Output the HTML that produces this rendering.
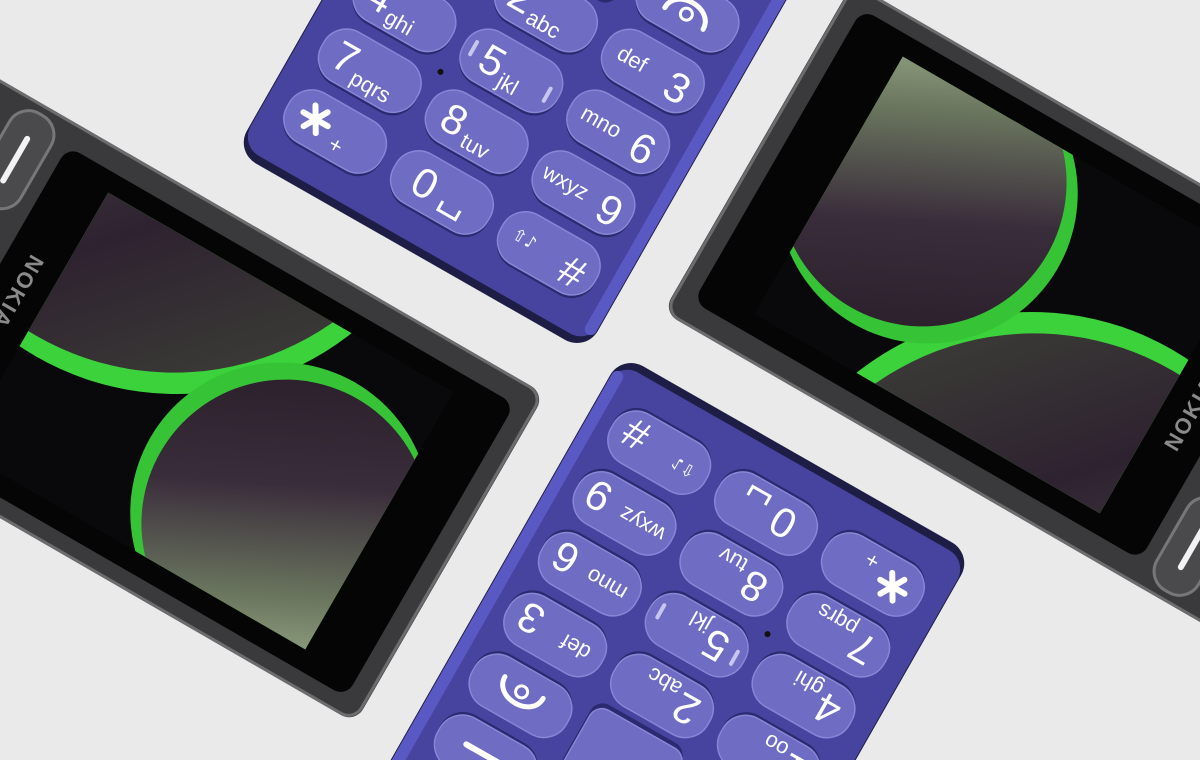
<!DOCTYPE html>
<html><head><meta charset="utf-8">
<style>
html,body{margin:0;padding:0;background:#eaeaea;width:1200px;height:760px;overflow:hidden;}
svg{display:block}
.d{font-family:"Liberation Sans",sans-serif;font-size:42px;fill:#fff}
.l{font-family:"Liberation Sans",sans-serif;font-size:22px;fill:#fff}
.s{font-family:"DejaVu Sans",sans-serif;font-size:17px;fill:#fff}
.nk{font-family:"Liberation Sans",sans-serif;font-size:22px;font-weight:bold;fill:#8a8a8a;letter-spacing:2px}
</style></head>
<body>
<svg width="1200" height="760" viewBox="0 0 1200 760" xmlns="http://www.w3.org/2000/svg">
<defs>
<clipPath id="scr"><rect x="-479" y="44" width="399" height="297"/></clipPath>
<linearGradient id="b1" x1="0" y1="0.2" x2="0.9" y2="1">
<stop offset="0" stop-color="#6b7a62"/><stop offset="0.35" stop-color="#4a4548"/><stop offset="0.65" stop-color="#2e2230"/><stop offset="0.9" stop-color="#3a3a36"/><stop offset="1" stop-color="#4ba045"/>
</linearGradient>
<linearGradient id="b2" x1="0.2" y1="0" x2="0.7" y2="1">
<stop offset="0" stop-color="#2a1e2a"/><stop offset="0.4" stop-color="#3a2d3b"/><stop offset="0.75" stop-color="#6a765e"/><stop offset="1" stop-color="#9aaa8a"/>
</linearGradient>
</defs>
<rect width="1200" height="760" fill="#eaeaea"/>

<!-- ===== HALF A ===== -->
<g>
<g transform="translate(545,394) rotate(30)">
<rect x="-1000" y="0" width="1000" height="380" rx="16" fill="#3a3a3c"/>
<rect x="-999" y="1.5" width="997" height="377" rx="15" fill="none" stroke="#6c6c6e" stroke-width="3"/>
<rect x="-537" y="24" width="516" height="338" rx="14" fill="#050505"/>
<rect x="-600" y="10" width="48" height="104" rx="22" fill="#4a4a4d" stroke="#77777a" stroke-width="3"/>
<line x1="-576" y1="38" x2="-576" y2="86" stroke="#f2f2f2" stroke-width="6" stroke-linecap="round"/>
<text class="nk" transform="translate(-515,135) rotate(90)">NOKIA</text>
<g clip-path="url(#scr)">
<rect x="-479" y="44" width="399" height="297" fill="#09090b"/>
<circle cx="-460" cy="-60" r="282" fill="#3bd23b"/>
<circle cx="-470" cy="-72" r="276" fill="url(#b1)"/>
<circle cx="-170" cy="235" r="150" fill="#36c436"/>
<circle cx="-160" cy="242" r="144" fill="url(#b2)"/>
</g>
</g>

<g transform="translate(477,133) rotate(29.7)">
<rect x="-201" y="-460" width="404" height="596" rx="24" fill="#1e1d45"/>
<rect x="-200" y="-460" width="402" height="588" rx="22" fill="#47449f"/>
<rect x="190" y="-460" width="12" height="580" rx="6" fill="#5a58c2"/>
<circle cx="-62" cy="-35" r="3" fill="#111"/>
<g transform="translate(123,-280)"><rect x="-54" y="-26" width="108" height="56" rx="26" fill="#2b2970"/><rect x="-55" y="-29" width="108" height="56" rx="26" fill="#6e6cc3" stroke="#8886d6" stroke-width="1.5"/><line x1="-22" y1="0" x2="22" y2="0" stroke="#fff" stroke-width="6" stroke-linecap="round"/></g>
<g transform="translate(-123,-210)"><rect x="-54" y="-26" width="108" height="56" rx="26" fill="#2b2970"/><rect x="-55" y="-29" width="108" height="56" rx="26" fill="#6e6cc3" stroke="#8886d6" stroke-width="1.5"/></g>
<g transform="translate(0,-225)"><rect x="-50" y="-42" width="104" height="92" rx="14" fill="#2b2970"/><rect x="-52" y="-45" width="104" height="90" rx="14" fill="#6e6cc3" stroke="#8886d6" stroke-width="1.5"/></g>
<g transform="translate(123,-210)"><rect x="-54" y="-26" width="108" height="56" rx="26" fill="#2b2970"/><rect x="-55" y="-29" width="108" height="56" rx="26" fill="#6e6cc3" stroke="#8886d6" stroke-width="1.5"/><path d="M-22,8 C-22,-16 22,-16 22,8" stroke="#fff" stroke-width="5" fill="none" stroke-linecap="round"/><circle cx="0" cy="3" r="6" stroke="#fff" stroke-width="3" fill="none"/></g>
<g transform="translate(-123,-140)"><rect x="-54" y="-26" width="108" height="56" rx="26" fill="#2b2970"/><rect x="-55" y="-29" width="108" height="56" rx="26" fill="#6e6cc3" stroke="#8886d6" stroke-width="1.5"/><text class="d" x="-40" y="14">1</text><text class="l" x="-14" y="20">oo</text></g>
<g transform="translate(0,-140)"><rect x="-54" y="-26" width="108" height="56" rx="26" fill="#2b2970"/><rect x="-55" y="-29" width="108" height="56" rx="26" fill="#6e6cc3" stroke="#8886d6" stroke-width="1.5"/><text class="d" x="-40" y="14">2</text><text class="l" x="-14" y="20">abc</text></g>
<g transform="translate(123,-140)"><rect x="-54" y="-26" width="108" height="56" rx="26" fill="#2b2970"/><rect x="-55" y="-29" width="108" height="56" rx="26" fill="#6e6cc3" stroke="#8886d6" stroke-width="1.5"/><text class="l" x="-40" y="6">def</text><text class="d" x="40" y="16" text-anchor="end">3</text></g>
<g transform="translate(-123,-70)"><rect x="-54" y="-26" width="108" height="56" rx="26" fill="#2b2970"/><rect x="-55" y="-29" width="108" height="56" rx="26" fill="#6e6cc3" stroke="#8886d6" stroke-width="1.5"/><text class="d" x="-40" y="14">4</text><text class="l" x="-14" y="20">ghi</text></g>
<g transform="translate(0,-70)"><rect x="-54" y="-26" width="108" height="56" rx="26" fill="#2b2970"/><rect x="-55" y="-29" width="108" height="56" rx="26" fill="#6e6cc3" stroke="#8886d6" stroke-width="1.5"/><text class="d" x="-34" y="14">5</text><text class="l" x="-8" y="20">jkl</text><rect x="-47" y="-11" width="4" height="18" rx="2" fill="#c8c6f0"/><rect x="40" y="-7" width="4" height="18" rx="2" fill="#c8c6f0"/></g>
<g transform="translate(123,-70)"><rect x="-54" y="-26" width="108" height="56" rx="26" fill="#2b2970"/><rect x="-55" y="-29" width="108" height="56" rx="26" fill="#6e6cc3" stroke="#8886d6" stroke-width="1.5"/><text class="l" x="-42" y="6">mno</text><text class="d" x="40" y="16" text-anchor="end">6</text></g>
<g transform="translate(-123,0)"><rect x="-54" y="-26" width="108" height="56" rx="26" fill="#2b2970"/><rect x="-55" y="-29" width="108" height="56" rx="26" fill="#6e6cc3" stroke="#8886d6" stroke-width="1.5"/><text class="d" x="-40" y="14">7</text><text class="l" x="-14" y="20">pqrs</text></g>
<g transform="translate(0,0)"><rect x="-54" y="-26" width="108" height="56" rx="26" fill="#2b2970"/><rect x="-55" y="-29" width="108" height="56" rx="26" fill="#6e6cc3" stroke="#8886d6" stroke-width="1.5"/><text class="d" x="-38" y="14">8</text><text class="l" x="-10" y="20">tuv</text></g>
<g transform="translate(123,0)"><rect x="-54" y="-26" width="108" height="56" rx="26" fill="#2b2970"/><rect x="-55" y="-29" width="108" height="56" rx="26" fill="#6e6cc3" stroke="#8886d6" stroke-width="1.5"/><text class="l" x="-46" y="6">wxyz</text><text class="d" x="42" y="16" text-anchor="end">9</text></g>
<g transform="translate(-123,70)"><rect x="-54" y="-26" width="108" height="56" rx="26" fill="#2b2970"/><rect x="-55" y="-29" width="108" height="56" rx="26" fill="#6e6cc3" stroke="#8886d6" stroke-width="1.5"/><g stroke="#fff" stroke-width="6" stroke-linecap="round"><line x1="-38" y1="-2" x2="-10" y2="-2"/><line x1="-31" y1="-14" x2="-17" y2="10"/><line x1="-17" y1="-14" x2="-31" y2="10"/></g><text class="l" x="0" y="18">+</text></g>
<g transform="translate(0,70)"><rect x="-54" y="-26" width="108" height="56" rx="26" fill="#2b2970"/><rect x="-55" y="-29" width="108" height="56" rx="26" fill="#6e6cc3" stroke="#8886d6" stroke-width="1.5"/><text class="d" x="-32" y="14">0</text><path d="M4,6 v10 h20 v-10" stroke="#fff" stroke-width="3" fill="none"/></g>
<g transform="translate(123,70)"><rect x="-54" y="-26" width="108" height="56" rx="26" fill="#2b2970"/><rect x="-55" y="-29" width="108" height="56" rx="26" fill="#6e6cc3" stroke="#8886d6" stroke-width="1.5"/><text class="s" x="-42" y="4">⇧♪</text><text class="d" x="40" y="18" text-anchor="end">#</text></g>
</g>
</g>

<!-- ===== HALF B (rotated copy) ===== -->
<g transform="rotate(180 604 353)">
<g transform="translate(545,394) rotate(30)">
<rect x="-1000" y="0" width="1000" height="380" rx="16" fill="#3a3a3c"/>
<rect x="-999" y="1.5" width="997" height="377" rx="15" fill="none" stroke="#6c6c6e" stroke-width="3"/>
<rect x="-537" y="24" width="516" height="338" rx="14" fill="#050505"/>
<rect x="-600" y="10" width="48" height="104" rx="22" fill="#4a4a4d" stroke="#77777a" stroke-width="3"/>
<line x1="-576" y1="38" x2="-576" y2="86" stroke="#f2f2f2" stroke-width="6" stroke-linecap="round"/>
<text class="nk" transform="translate(-515,135) rotate(90)">NOKIA</text>
<g clip-path="url(#scr)">
<rect x="-479" y="44" width="399" height="297" fill="#09090b"/>
<circle cx="-460" cy="-60" r="282" fill="#3bd23b"/>
<circle cx="-470" cy="-72" r="276" fill="url(#b1)"/>
<circle cx="-170" cy="235" r="150" fill="#36c436"/>
<circle cx="-160" cy="242" r="144" fill="url(#b2)"/>
</g>
</g>

<g transform="translate(477,133) rotate(29.7)">
<rect x="-201" y="-460" width="404" height="596" rx="24" fill="#1e1d45"/>
<rect x="-200" y="-460" width="402" height="588" rx="22" fill="#47449f"/>
<rect x="190" y="-460" width="12" height="580" rx="6" fill="#5a58c2"/>
<circle cx="-62" cy="-35" r="3" fill="#111"/>
<g transform="translate(123,-280)"><rect x="-54" y="-26" width="108" height="56" rx="26" fill="#2b2970"/><rect x="-55" y="-29" width="108" height="56" rx="26" fill="#6e6cc3" stroke="#8886d6" stroke-width="1.5"/><line x1="-22" y1="0" x2="22" y2="0" stroke="#fff" stroke-width="6" stroke-linecap="round"/></g>
<g transform="translate(-123,-210)"><rect x="-54" y="-26" width="108" height="56" rx="26" fill="#2b2970"/><rect x="-55" y="-29" width="108" height="56" rx="26" fill="#6e6cc3" stroke="#8886d6" stroke-width="1.5"/></g>
<g transform="translate(0,-225)"><rect x="-50" y="-42" width="104" height="92" rx="14" fill="#2b2970"/><rect x="-52" y="-45" width="104" height="90" rx="14" fill="#6e6cc3" stroke="#8886d6" stroke-width="1.5"/></g>
<g transform="translate(123,-210)"><rect x="-54" y="-26" width="108" height="56" rx="26" fill="#2b2970"/><rect x="-55" y="-29" width="108" height="56" rx="26" fill="#6e6cc3" stroke="#8886d6" stroke-width="1.5"/><path d="M-22,8 C-22,-16 22,-16 22,8" stroke="#fff" stroke-width="5" fill="none" stroke-linecap="round"/><circle cx="0" cy="3" r="6" stroke="#fff" stroke-width="3" fill="none"/></g>
<g transform="translate(-123,-140)"><rect x="-54" y="-26" width="108" height="56" rx="26" fill="#2b2970"/><rect x="-55" y="-29" width="108" height="56" rx="26" fill="#6e6cc3" stroke="#8886d6" stroke-width="1.5"/><text class="d" x="-40" y="14">1</text><text class="l" x="-14" y="20">oo</text></g>
<g transform="translate(0,-140)"><rect x="-54" y="-26" width="108" height="56" rx="26" fill="#2b2970"/><rect x="-55" y="-29" width="108" height="56" rx="26" fill="#6e6cc3" stroke="#8886d6" stroke-width="1.5"/><text class="d" x="-40" y="14">2</text><text class="l" x="-14" y="20">abc</text></g>
<g transform="translate(123,-140)"><rect x="-54" y="-26" width="108" height="56" rx="26" fill="#2b2970"/><rect x="-55" y="-29" width="108" height="56" rx="26" fill="#6e6cc3" stroke="#8886d6" stroke-width="1.5"/><text class="l" x="-40" y="6">def</text><text class="d" x="40" y="16" text-anchor="end">3</text></g>
<g transform="translate(-123,-70)"><rect x="-54" y="-26" width="108" height="56" rx="26" fill="#2b2970"/><rect x="-55" y="-29" width="108" height="56" rx="26" fill="#6e6cc3" stroke="#8886d6" stroke-width="1.5"/><text class="d" x="-40" y="14">4</text><text class="l" x="-14" y="20">ghi</text></g>
<g transform="translate(0,-70)"><rect x="-54" y="-26" width="108" height="56" rx="26" fill="#2b2970"/><rect x="-55" y="-29" width="108" height="56" rx="26" fill="#6e6cc3" stroke="#8886d6" stroke-width="1.5"/><text class="d" x="-34" y="14">5</text><text class="l" x="-8" y="20">jkl</text><rect x="-47" y="-11" width="4" height="18" rx="2" fill="#c8c6f0"/><rect x="40" y="-7" width="4" height="18" rx="2" fill="#c8c6f0"/></g>
<g transform="translate(123,-70)"><rect x="-54" y="-26" width="108" height="56" rx="26" fill="#2b2970"/><rect x="-55" y="-29" width="108" height="56" rx="26" fill="#6e6cc3" stroke="#8886d6" stroke-width="1.5"/><text class="l" x="-42" y="6">mno</text><text class="d" x="40" y="16" text-anchor="end">6</text></g>
<g transform="translate(-123,0)"><rect x="-54" y="-26" width="108" height="56" rx="26" fill="#2b2970"/><rect x="-55" y="-29" width="108" height="56" rx="26" fill="#6e6cc3" stroke="#8886d6" stroke-width="1.5"/><text class="d" x="-40" y="14">7</text><text class="l" x="-14" y="20">pqrs</text></g>
<g transform="translate(0,0)"><rect x="-54" y="-26" width="108" height="56" rx="26" fill="#2b2970"/><rect x="-55" y="-29" width="108" height="56" rx="26" fill="#6e6cc3" stroke="#8886d6" stroke-width="1.5"/><text class="d" x="-38" y="14">8</text><text class="l" x="-10" y="20">tuv</text></g>
<g transform="translate(123,0)"><rect x="-54" y="-26" width="108" height="56" rx="26" fill="#2b2970"/><rect x="-55" y="-29" width="108" height="56" rx="26" fill="#6e6cc3" stroke="#8886d6" stroke-width="1.5"/><text class="l" x="-46" y="6">wxyz</text><text class="d" x="42" y="16" text-anchor="end">9</text></g>
<g transform="translate(-123,70)"><rect x="-54" y="-26" width="108" height="56" rx="26" fill="#2b2970"/><rect x="-55" y="-29" width="108" height="56" rx="26" fill="#6e6cc3" stroke="#8886d6" stroke-width="1.5"/><g stroke="#fff" stroke-width="6" stroke-linecap="round"><line x1="-38" y1="-2" x2="-10" y2="-2"/><line x1="-31" y1="-14" x2="-17" y2="10"/><line x1="-17" y1="-14" x2="-31" y2="10"/></g><text class="l" x="0" y="18">+</text></g>
<g transform="translate(0,70)"><rect x="-54" y="-26" width="108" height="56" rx="26" fill="#2b2970"/><rect x="-55" y="-29" width="108" height="56" rx="26" fill="#6e6cc3" stroke="#8886d6" stroke-width="1.5"/><text class="d" x="-32" y="14">0</text><path d="M4,6 v10 h20 v-10" stroke="#fff" stroke-width="3" fill="none"/></g>
<g transform="translate(123,70)"><rect x="-54" y="-26" width="108" height="56" rx="26" fill="#2b2970"/><rect x="-55" y="-29" width="108" height="56" rx="26" fill="#6e6cc3" stroke="#8886d6" stroke-width="1.5"/><text class="s" x="-42" y="4">⇧♪</text><text class="d" x="40" y="18" text-anchor="end">#</text></g>
</g>
</g>
</svg>
</body></html>
